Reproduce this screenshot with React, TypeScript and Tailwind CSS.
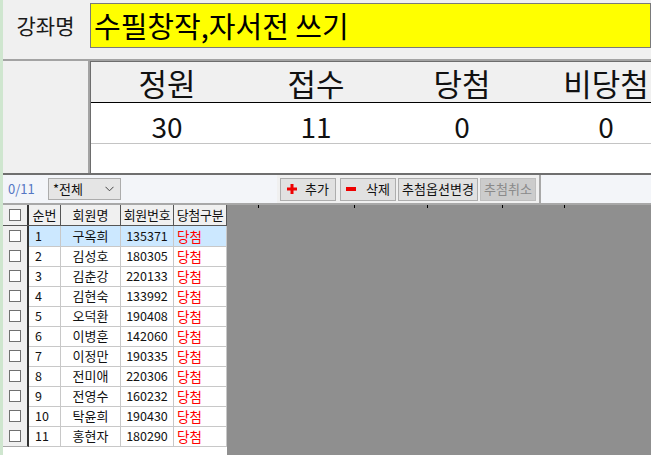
import React from 'react';

const FONT = { fontFamily: '"Noto Sans CJK KR", "Noto Sans", sans-serif' };

const STATS = [
  { label: '정원', value: '30', w: 'w-[152px]' },
  { label: '접수', value: '11', w: 'w-[146px]' },
  { label: '당첨', value: '0', w: 'w-[146px]' },
  { label: '비당첨', value: '0', w: 'w-[142px]' },
];

const MEMBERS = [
  { no: 1, name: '구옥희', id: '135371' },
  { no: 2, name: '김성호', id: '180305' },
  { no: 3, name: '김춘강', id: '220133' },
  { no: 4, name: '김현숙', id: '133992' },
  { no: 5, name: '오덕환', id: '190408' },
  { no: 6, name: '이병훈', id: '142060' },
  { no: 7, name: '이정만', id: '190335' },
  { no: 8, name: '전미애', id: '220306' },
  { no: 9, name: '전영수', id: '160232' },
  { no: 10, name: '탁윤희', id: '190430' },
  { no: 11, name: '홍현자', id: '180290' },
];

const TICKS = ['left-[31px]', 'left-[127px]', 'left-[200px]', 'left-[275px]', 'left-[337px]'];

function CheckBox() {
  return <div className="h-[12px] w-[12px] border border-[#707070] bg-white" />;
}

function ToolButton({ children, disabled }: { children: React.ReactNode; disabled?: boolean }) {
  return (
    <button
      type="button"
      className={
        'flex h-[23px] w-full items-center justify-center gap-[8px] border px-[3px] text-[13px] ' +
        (disabled
          ? 'border-[#bfbfbf] bg-[#cccccc] text-[#8a8a8a]'
          : 'border-[#adadad] bg-[#e1e1e1] text-[#111]')
      }
    >
      {children}
    </button>
  );
}

export default function App() {
  return (
    <div
      className="flex h-[455px] w-[651px] flex-col overflow-hidden border-l-[3px] border-[#cfe6cf] bg-[#f0f0f0]"
      style={FONT}
    >
      {/* 강좌명 */}
      <div className="flex h-[59px] shrink-0 items-start pt-[3px]">
        <div className="flex h-[45px] w-[87px] shrink-0 items-center justify-center pr-[2px] text-[21px] text-[#1a1a1a]">
          강좌명
        </div>
        <div className="flex h-[45px] flex-1 items-center overflow-hidden whitespace-nowrap border border-[#7a7a7a] bg-[#ffff00] pl-[3px] text-[29px] leading-none text-black">
          수필창작,자서전 쓰기
        </div>
      </div>

      {/* 통계 */}
      <div className="flex shrink-0 border-t-2 border-[#a3a3a3]">
        <div className="w-[87px] shrink-0 border-r-2 border-[#a3a3a3]" />
        <div className="flex min-w-0 flex-1 flex-col overflow-hidden border-l border-t border-[#6d6d6d]">
          <div className="flex h-[41px] border-b border-black bg-[#f0f0f0]">
            {STATS.map((s) => (
              <div key={s.label} className={`${s.w} flex shrink-0 items-center justify-center whitespace-nowrap pt-[2px] text-[31px] text-[#111]`}>
                {s.label}
              </div>
            ))}
          </div>
          <div className="flex h-[41px] border-b border-[#c4c4c4] bg-white">
            {STATS.map((s) => (
              <div key={s.label} className={`${s.w} flex shrink-0 items-center justify-center pt-[6px] text-[28px] text-[#111]`}>
                {s.value}
              </div>
            ))}
          </div>
          <div className="h-[29px] bg-white" />
        </div>
      </div>

      {/* 툴바 */}
      <div className="flex h-[32px] shrink-0 border-b-2 border-t-2 border-b-[#a8a8a8] border-t-[#6f6f6f] bg-[#f3f5f9]">
        <div className="flex w-[274px] shrink-0 items-center pl-[5px]">
          <span className="w-[40px] text-[13px] text-[#5577c4]">0/11</span>
          <div className="flex h-[22px] w-[73px] items-center justify-between border border-[#acacac] bg-[#e5e5e5] pl-[4px] pr-[6px] text-[13px] text-[#111]">
            <span>*전체</span>
            <svg width="9" height="6" viewBox="0 0 9 6" fill="none" stroke="#444" strokeWidth="1">
              <path d="M0.5 0.8 L4.5 4.8 L8.5 0.8" />
            </svg>
          </div>
        </div>
        <div className="flex items-center gap-[2px] border-r-2 border-[#a8a8a8] bg-[#f0f0f0] pl-[3px] pr-[3px]">
          <div className="w-[56px]">
            <ToolButton>
              <svg width="10" height="10" viewBox="0 0 10 10">
                <rect x="3.5" y="0" width="3" height="10" fill="#ee0000" />
                <rect x="0" y="3.5" width="10" height="3" fill="#ee0000" />
              </svg>
              <span>추가</span>
            </ToolButton>
          </div>
          <div className="ml-[2px] w-[56px]">
            <ToolButton>
              <span className="h-[4px] w-[10px] bg-[#ee0000]" />
              <span className="ml-[2px]">삭제</span>
            </ToolButton>
          </div>
          <div className="w-[80px]">
            <ToolButton>추첨옵션변경</ToolButton>
          </div>
          <div className="w-[56px]">
            <ToolButton disabled>추첨취소</ToolButton>
          </div>
        </div>
        <div className="flex-1" />
      </div>

      {/* 그리드 */}
      <div className="flex flex-1">
        <div className="w-[224px] bg-white text-[13px] text-[#111]">
          <div className="grid h-[21px] grid-cols-[26px_32px_60px_53px_53px] border-b border-[#555] bg-[#f0f0f0]">
            <div className="flex items-center justify-center border-r-2 border-[#333]">
              <CheckBox />
            </div>
            <div className="flex items-center justify-center border-r border-[#555]">순번</div>
            <div className="flex items-center justify-center border-r border-[#555]">회원명</div>
            <div className="flex items-center justify-center border-r border-[#555] tracking-[-0.3px]">회원번호</div>
            <div className="flex items-center justify-center border-r border-[#555] tracking-[-0.3px]">당첨구분</div>
          </div>
          {MEMBERS.map((m, i) => (
            <div key={m.no} className="grid h-[20px] grid-cols-[26px_32px_60px_53px_53px]">
              <div className="flex items-center justify-center border-b border-r-2 border-b-[#a8a8a8] border-r-[#333] bg-[#f0f0f0]">
                <CheckBox />
              </div>
              <div className={`flex items-center border-b border-r border-[#c8c8c8] pl-[6px] text-[12.5px] ${i === 0 ? 'bg-[#cce8ff]' : ''}`}>
                {m.no}
              </div>
              <div className={`flex items-center justify-center border-b border-r border-[#c8c8c8] ${i === 0 ? 'bg-[#cce8ff]' : ''}`}>
                {m.name}
              </div>
              <div className={`flex items-center justify-center border-b border-r border-[#c8c8c8] text-[12.5px] ${i === 0 ? 'bg-[#cce8ff]' : ''}`}>
                {m.id}
              </div>
              <div className={`flex items-center border-b border-r border-[#c8c8c8] pl-[3px] text-[13.5px] text-[#ff0000] ${i === 0 ? 'bg-[#cce8ff]' : ''}`}>
                당첨
              </div>
            </div>
          ))}
        </div>
        <div className="relative flex-1 bg-[#8f8f8f]">
          {TICKS.map((t) => (
            <span key={t} className={`absolute top-0 h-[3px] w-px bg-black ${t}`} />
          ))}
        </div>
      </div>
    </div>
  );
}
